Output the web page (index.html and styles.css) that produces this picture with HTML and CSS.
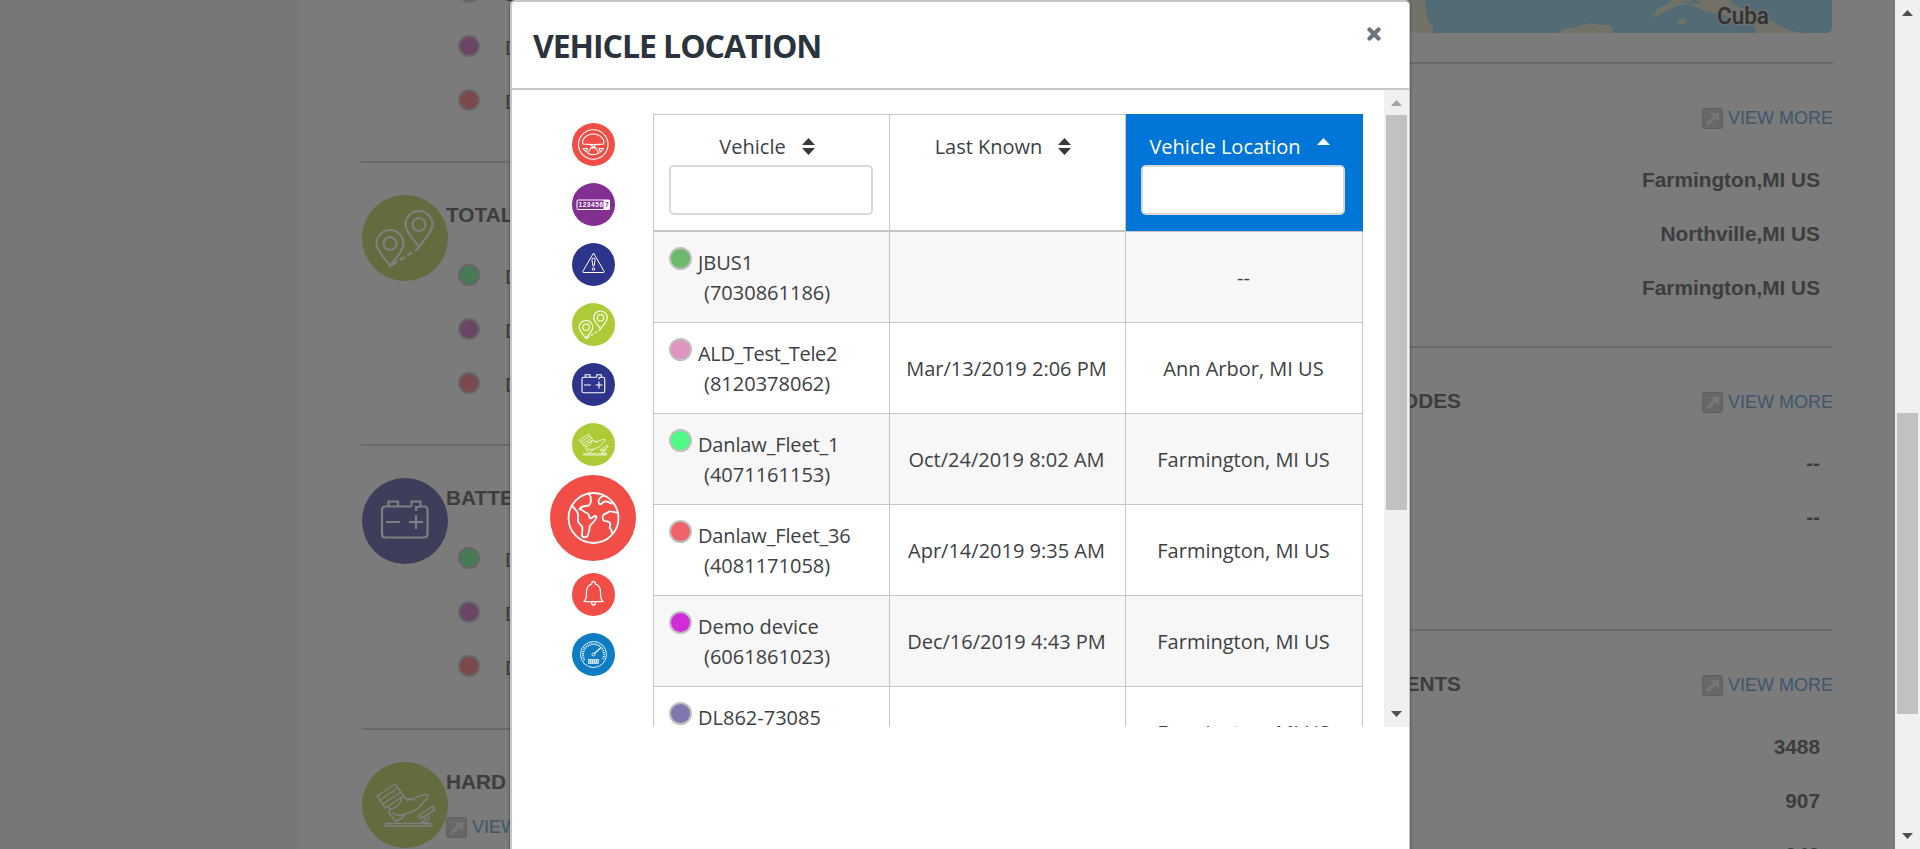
FILE: index.html
```html
<!DOCTYPE html>
<html lang="en">
<head>
<meta charset="utf-8">
<title>Vehicle Location</title>
<link rel="stylesheet" href="styles.css">
</head>
<body>
<svg class="defs" width="0" height="0">
  <symbol id="trips" viewBox="0 0 86 86"><g fill="none" stroke="#fff" stroke-width="2.200"><path d="M28 71C24 64 14.500 57 14.500 48.500A13.500 13.500 0 0 1 41.500 48.500C41.500 57 32 64 28 71Z"/><circle cx="28" cy="48.500" r="6.500"/><path d="M57 52C53 45 43.500 38 43.500 29.500A13.500 13.500 0 0 1 70.500 29.500C70.500 38 61 45 57 52Z"/><circle cx="57" cy="29.500" r="6.500"/><path d="M30 70L57 53" stroke-dasharray="6 3"/></g></symbol>
  <symbol id="battery" viewBox="0 0 86 86"><g fill="none" stroke="#fff" stroke-width="2.200"><path d="M49 28.500H23Q20 28.500 20 32V56Q20 59.500 23.500 59.500H62Q65.500 59.500 65.500 56V32Q65.500 28.500 62 28.500H58.500V23.500H49.500V28.500M26.500 28V23.500H36V28M54 33V29H58"/><path d="M24 44H38M47 44H61M54 37V51"/></g></symbol>
  <symbol id="brake" viewBox="0 0 86 86"><g fill="none" stroke="#fff" stroke-width="1.500" stroke-linejoin="round"><path d="M15 34L33 22L41.500 33.500L23.500 46ZM18 38L36 26M21 42L39 30M26 45C28 50 39 44 39 36M41 35C46 38 52 38 55 35C60 34 62 32 66 33C67 36 63 38 60 42C56 48 50 50 43 52L41 55L34 59.500L27 51L28 46M30 50C33 54 39 54 43 52M45 36V39M48 36V39M51 36V39M56 54L71 44L72.500 48L58 56.500Z"/><path d="M66 52C68 56 65 62 60 61.500M63 53C64 57 62 60 58 61.500M23 61.500H69V64H23Z"/></g></symbol>
  <symbol id="globe" viewBox="0 0 86 86"><g fill="none" stroke="#fff" stroke-width="1.800" stroke-linejoin="round"><circle cx="43.500" cy="43" r="25"/><path d="M22.500 31C24 34 28 36 28 39V46C28 49 32.500 50 32.500 53L32 60C32 63 37 63 38 60C38 57 40 56 39.500 52C40 49 46 46 46.500 42C45 39 43 43 40.500 43.500C38 42 40 39 37 38C34 38 33 34 29.500 34C31 31 36 31 39 30.500C42 27 41 25 40.500 24C42 21 39 21 39 18.500M54 20.500C50 22 47.500 25 49 28.500C51 31 52 27 55 26.500C58 26 60 29 65 28.500M68 37.500C64 38 62 35.500 59 36.500C57 39 53 38 52.500 42C53 47 55 46 58 46.500C62 48 60 51 59.500 53C63 55 61 57 62.500 59"/></g></symbol>
  <symbol id="wheel" viewBox="0 0 86 86"><g fill="none" stroke="#fff" stroke-width="2.200" stroke-linejoin="round"><circle cx="42.500" cy="43" r="29.500"/><path d="M21 38C22 28 33 22 42.500 22S63 28 64 38L63 42C56 43 49 43 42.500 43S29 43 22 42ZM37 44L48 50M48 44L37 50M38 50L31 60Q42 67 54 60L47 50ZM22 51H31L28 58ZM63 51H54L57 58Z"/></g></symbol>
  <symbol id="odo" viewBox="0 0 86 86"><rect x="10" y="34" width="65" height="19" rx="2" fill="none" stroke="#fff" stroke-width="2"/><path d="M63 34H76V53H63Z" fill="#fff"/><text x="13" y="48" class="digits" textLength="49">123456</text><text x="66" y="48" class="digits digit-last">7</text></symbol>
  <symbol id="warning" viewBox="0 0 86 86"><g fill="none" stroke="#fff" stroke-width="2" stroke-linejoin="round"><path d="M43 20L64.500 57Q65 59 63 59H23Q21 59 21.500 57Z"/><path d="M43 30Q47 30 46 35L44 46H42L40 35Q39 30 43 30Z"/><circle cx="43" cy="52" r="2.500"/></g></symbol>
  <symbol id="bell" viewBox="0 0 86 86"><g fill="none" stroke="#fff" stroke-width="2.500" stroke-linejoin="round"><path d="M40 22A3.500 3.500 0 1 1 46 22C55 24 57 31 57 38C57 48 57 52 62 57H24C29 52 29 48 29 38C29 31 31 24 40 22M39 58Q39 64 43 64T47 58"/></g></symbol>
  <symbol id="gauge" viewBox="0 0 86 86"><g fill="none" stroke="#fff"><circle cx="43" cy="43" r="26" stroke-width="1.800"/><path d="M25 54A21 21 0 1 1 61 54" stroke-width="4" stroke-dasharray="2 2"/><path d="M45 41L58 29" stroke-width="2.500"/><circle cx="43" cy="43" r="3" stroke-width="1.800"/><rect x="33" y="53" width="20" height="8" stroke-width="1.500"/><path d="M35 57H52" stroke-width="5" stroke-dasharray="3 1"/></g></symbol>
  <symbol id="out" viewBox="0 0 21 21"><rect x=".5" y=".5" width="20" height="20" rx="2" fill="#cecece" stroke="#bdbdbd"/><path d="M4 15L11 8L8 5H17V13L13.500 10.500L6.500 17.500Z" fill="#ececec"/></symbol>
</svg>

<div class="page">
  <main class="dash">
    <section class="left">
      <article class="card card-top">
        <div class="body"><ul class="devices"><li><i class="dot g"></i>D</li><li><i class="dot p"></i>D</li><li><i class="dot r"></i>D</li></ul></div>
      </article>
      <article class="card">
        <div class="badge olive"><svg><use href="#trips"/></svg></div>
        <div class="body"><h3>TOTAL</h3><ul class="devices"><li><i class="dot g"></i>D</li><li><i class="dot p"></i>D</li><li><i class="dot r"></i>D</li></ul></div>
      </article>
      <article class="card">
        <div class="badge slate"><svg><use href="#battery"/></svg></div>
        <div class="body"><h3>BATTERY</h3><ul class="devices"><li><i class="dot g"></i>D</li><li><i class="dot p"></i>D</li><li><i class="dot r"></i>D</li></ul></div>
      </article>
      <article class="card">
        <div class="badge olive"><svg><use href="#brake"/></svg></div>
        <div class="body"><h3>HARD</h3><a class="more"><svg><use href="#out"/></svg>VIEW</a></div>
      </article>
    </section>
    <section class="right">
      <div class="map">
        <svg width="423" height="33" viewBox="0 0 423 33">
          <path fill="#e4e6cc" d="M0 0H15L16 12L19 22L23 26V33H0ZM147 33L154 29L165 27L180 23L190 25H200L203 28V33ZM237 17L245 15L247 8L258 4L262 0H319L328 7L340 10L350 12L359 20L373 27L381 31L394 33H346L344 24L330 20L308 14L292 10L280 4L266 6L255 11L247 16ZM268 20L275 18L276 22L271 25L267 23Z"/>
          <path fill="#a4d6ea" d="M268 2L285 0L292 3L283 4Z"/>
          <text class="country" x="307" y="24" textLength="52" lengthAdjust="spacingAndGlyphs">Cuba</text>
        </svg>
      </div>
      <article class="panel">
        <header><h3></h3><a class="more"><svg><use href="#out"/></svg>VIEW MORE</a></header>
        <p>Farmington,MI US</p><p>Northville,MI US</p><p>Farmington,MI US</p>
      </article>
      <article class="panel">
        <header><h3>CODES</h3><a class="more"><svg><use href="#out"/></svg>VIEW MORE</a></header>
        <p>--</p><p>--</p>
      </article>
      <article class="panel">
        <header><h3>EVENTS</h3><a class="more"><svg><use href="#out"/></svg>VIEW MORE</a></header>
        <p>3488</p><p>907</p><p>949</p>
      </article>
    </section>
  </main>
  <div class="shade"></div>
  <div class="modal">
    <header class="modal-head">
      <h1>VEHICLE LOCATION</h1>
      <svg class="close" width="14" height="14" viewBox="0 0 14 14"><path d="M2.500 2.500L11.500 11.500M11.500 2.500L2.500 11.500" stroke="#6c757d" stroke-width="4.200" stroke-linecap="round"/></svg>
    </header>
    <div class="modal-body">
      <nav class="rail">
        <a class="red"><svg><use href="#wheel"/></svg></a>
        <a class="purple"><svg><use href="#odo"/></svg></a>
        <a class="navy"><svg><use href="#warning"/></svg></a>
        <a class="lime"><svg><use href="#trips"/></svg></a>
        <a class="navy"><svg><use href="#battery"/></svg></a>
        <a class="lime"><svg><use href="#brake"/></svg></a>
        <a class="red active"><svg><use href="#globe"/></svg></a>
        <a class="red"><svg><use href="#bell"/></svg></a>
        <a class="blue"><svg><use href="#gauge"/></svg></a>
      </nav>
      <table class="grid">
        <thead><tr>
          <th><div class="label"><span>Vehicle</span><svg width="13" height="17" viewBox="0 0 13 17"><path d="M6.500 0L13 7H0ZM0 10H13L6.500 17Z" fill="#373a3c"/></svg></div><input type="text"></th>
          <th><div class="label"><span>Last Known</span><svg width="13" height="17" viewBox="0 0 13 17"><path d="M6.500 0L13 7H0ZM0 10H13L6.500 17Z" fill="#373a3c"/></svg></div></th>
          <th class="sorted"><div class="label"><span>Vehicle Location</span><svg width="13" height="17" viewBox="0 0 13 17"><path d="M6.500 0L13 7H0Z" fill="#fff"/></svg></div><input type="text"></th>
        </tr></thead>
        <tbody>
          <tr><td><div class="veh"><i class="dot c1"></i><div>JBUS1<br><span>(7030861186)</span></div></div></td><td></td><td>--</td></tr>
          <tr><td><div class="veh"><i class="dot c2"></i><div><b class="tight">ALD_Test_Tele2</b><br><span>(8120378062)</span></div></div></td><td>Mar/13/2019 2:06 PM</td><td>Ann Arbor, MI US</td></tr>
          <tr><td><div class="veh"><i class="dot c3"></i><div><b>Danlaw_Fleet_1</b><br><span>(4071161153)</span></div></div></td><td>Oct/24/2019 8:02 AM</td><td>Farmington, MI US</td></tr>
          <tr><td><div class="veh"><i class="dot c4"></i><div><b>Danlaw_Fleet_36</b><br><span>(4081171058)</span></div></div></td><td>Apr/14/2019 9:35 AM</td><td>Farmington, MI US</td></tr>
          <tr><td><div class="veh"><i class="dot c5"></i><div>Demo device<br><span>(6061861023)</span></div></div></td><td>Dec/16/2019 4:43 PM</td><td>Farmington, MI US</td></tr>
          <tr><td><div class="veh"><i class="dot c6"></i><div>DL862-73085</div></div></td><td></td><td>Farmington, MI US</td></tr>
        </tbody>
      </table>
      <div class="bar"><i class="up pale"></i><div class="thumb thumb-in"></div><i class="down"></i></div>
    </div>
  </div>
</div>
<div class="bar bar-page"><i class="up"></i><div class="thumb thumb-page"></div><i class="down"></i></div>
</body>
</html>
```
FILE: styles.css
```css
* { box-sizing: border-box; }
body { margin: 0; height: 849px; display: flex; overflow: hidden; font-family: "Open Sans", "Noto Sans", sans-serif; font-size: 20px; color: #3e4143; }
h1, h3, p, ul { margin: 0; padding: 0; }
ul { list-style: none; }
svg { display: block; flex: none; }
.defs { position: absolute; }
.digits { font: bold 13px "Liberation Sans", sans-serif; fill: #fff; }
.digit-last { fill: #832e91; }

/* dashboard */
.page { position: relative; width: 1895px; height: 849px; overflow: hidden; background: #eee; padding-left: 299px; }
.dash { height: 849px; background: #f6f6f6; padding: 0 62px; display: grid; grid-template-columns: 736px 1fr; font-family: "Liberation Sans", Arial, sans-serif; color: #7a7a7a; overflow: hidden; }
.left, .right { overflow: hidden; height: 849px; }
.card { height: 283.400px; border-bottom: 2px solid #d4d4d4; display: flex; }
.card-top { height: 163px; padding-left: 86px; overflow: hidden; }
.card-top .devices { margin-top: -34px; }
.badge { width: 86px; height: 86px; border-radius: 50%; margin: 32px 0 0 1px; flex: none; }
.badge svg { width: 86px; height: 86px; }
.olive { background: #c6d67e; }
.slate { background: #7a7cb4; }
.body { flex: 1; margin-left: -2px; }
.card-top .body { margin-left: -1px; }
.body h3 { height: 86px; padding-top: 40px; }
h3 { font-size: 20.800px; line-height: 24px; }
.devices li { height: 54px; display: flex; align-items: center; padding: 2px 0 0 12px; font-size: 20.800px; gap: 25px; }
.devices .dot { position: relative; top: -2px; }
.dot { width: 22px; height: 22px; border-radius: 50%; border: 2px solid #ccc; flex: none; }
.g { background: #8af6aa; }
.p { background: #d68aca; }
.r { background: #f4949a; }
.more { display: flex; gap: 5px; color: #82acd6; font-size: 18px; line-height: 20px; }
.more svg { width: 21px; height: 21px; }
.body > .more { margin-top: 1px; }
.map { height: 33px; width: 422px; margin-left: 313px; border-radius: 0 0 5px 5px; overflow: hidden; background: #a4d6ea; }
.country { font: 500 24px Roboto, sans-serif; fill: #666; stroke: #ddd; stroke-width: 3px; paint-order: stroke; }
.panel { height: 283.600px; border-top: 2px solid #d4d4d4; }
.map + .panel { margin-top: 29px; }
.panel header { height: 88.500px; padding-top: 44px; display: flex; justify-content: space-between; }
.panel header h3 { width: 364px; text-align: right; margin-top: -3px; }
.panel p { height: 54px; line-height: 54px; text-align: right; padding-right: 13px; font-size: 20.800px; font-weight: bold; }
.shade { position: absolute; inset: 0; background: rgba(0, 0, 0, .5); }

/* dialog */
.modal { position: absolute; left: 510px; top: 0; width: 900px; height: 860px; background: #fff; border: 2px solid #c5c5c5; border-right-width: 1px; border-radius: 5px; box-shadow: 0 0 3px rgba(0, 0, 0, .5); }
.modal-head { height: 88px; border-bottom: 2px solid #c8c8c8; display: flex; justify-content: space-between; padding: 22px 28px 0 21px; }
h1 { font-size: 32px; line-height: 44px; font-weight: 700; color: #2b343c; letter-spacing: -1.050px; white-space: nowrap; }
.close { margin-top: 3px; }
.modal-body { height: 637px; display: flex; overflow: hidden; }
.rail { width: 141px; padding: 33px 0 0 21px; display: flex; flex-direction: column; align-items: center; gap: 17px; }
.rail a { width: 43px; height: 43px; border-radius: 50%; flex: none; }
.rail svg { width: 100%; height: 100%; }
.rail .active { width: 86px; height: 86px; margin: -8px 0 -5px; }
.red { background: #f14e48; }
.purple { background: #832e91; }
.navy { background: #2c3589; }
.lime { background: #aecb37; }
.blue { background: #0f7dc2; }

.grid { table-layout: fixed; width: 710px; height: 664px; margin-top: 24px; border-collapse: separate; border-spacing: 0; border-left: 1px solid #c5c5c5; flex: none; }
th, td { border-right: 1px solid #c5c5c5; text-align: center; padding: 0; font-weight: 400; }
th { height: 118px; border-top: 1px solid #c5c5c5; border-bottom: 2px solid #c5c5c5; vertical-align: top; width: 236px; }
th:last-child { width: 237px; }
.sorted { background: #0275d8; color: #fff; border-color: #0275d8; border-bottom: 1px solid #c5c5c5; }
.label { height: 50px; padding: 17px 9px 0 0; line-height: 30px; display: flex; justify-content: center; gap: 16px; white-space: nowrap; }
.label svg { margin-top: 6px; }
input { display: block; width: 204px; height: 50px; margin: 0 0 0 15px; border: 2px solid #d9d9d9; border-radius: 5px; background: #fff; }
td { height: 91px; padding: 2px 2px 0 0; border-bottom: 1px solid #c5c5c5; line-height: 30px; white-space: nowrap; }
td:first-child { padding: 0; }
td:last-child { padding-right: 1px; }
tbody tr:nth-child(odd) { background: #f7f7f7; }
.veh { height: 90px; display: flex; padding: 16px 15px 14px; gap: 6px; text-align: left; }
.veh b { font-weight: 400; letter-spacing: -.150px; }
.veh .tight { letter-spacing: -.350px; }
.veh span { margin-left: 6px; }
.veh .dot { width: 23px; height: 23px; border-color: #bfbfbf; margin-top: -1px; }
.c1 { background: #6bba6b; }
.c2 { background: #e094bf; }
.c3 { background: #50fa86; }
.c4 { background: #f26068; }
.c5 { background: #d02cd8; }
.c6 { background: #7f79b0; }

/* scrollbars */
.bar { width: 25px; height: 637px; background: #f0f0f0; flex: none; margin-left: auto; display: flex; flex-direction: column; align-items: center; }
.bar-page { height: 849px; margin: 0; }
.bar i { width: 11px; height: 6px; background: #505050; flex: none; }
.up { margin-top: 10px; clip-path: polygon(50% 0, 100% 100%, 0 100%); }
.down { margin: auto 0 10px; clip-path: polygon(0 0, 100% 0, 50% 100%); }
.bar .pale { background: #a3a3a3; }
.thumb { width: 21px; background: #c1c1c1; flex: none; }
.thumb-in { height: 395px; margin-top: 9px; }
.thumb-page { height: 301px; margin-top: 397px; }
```
